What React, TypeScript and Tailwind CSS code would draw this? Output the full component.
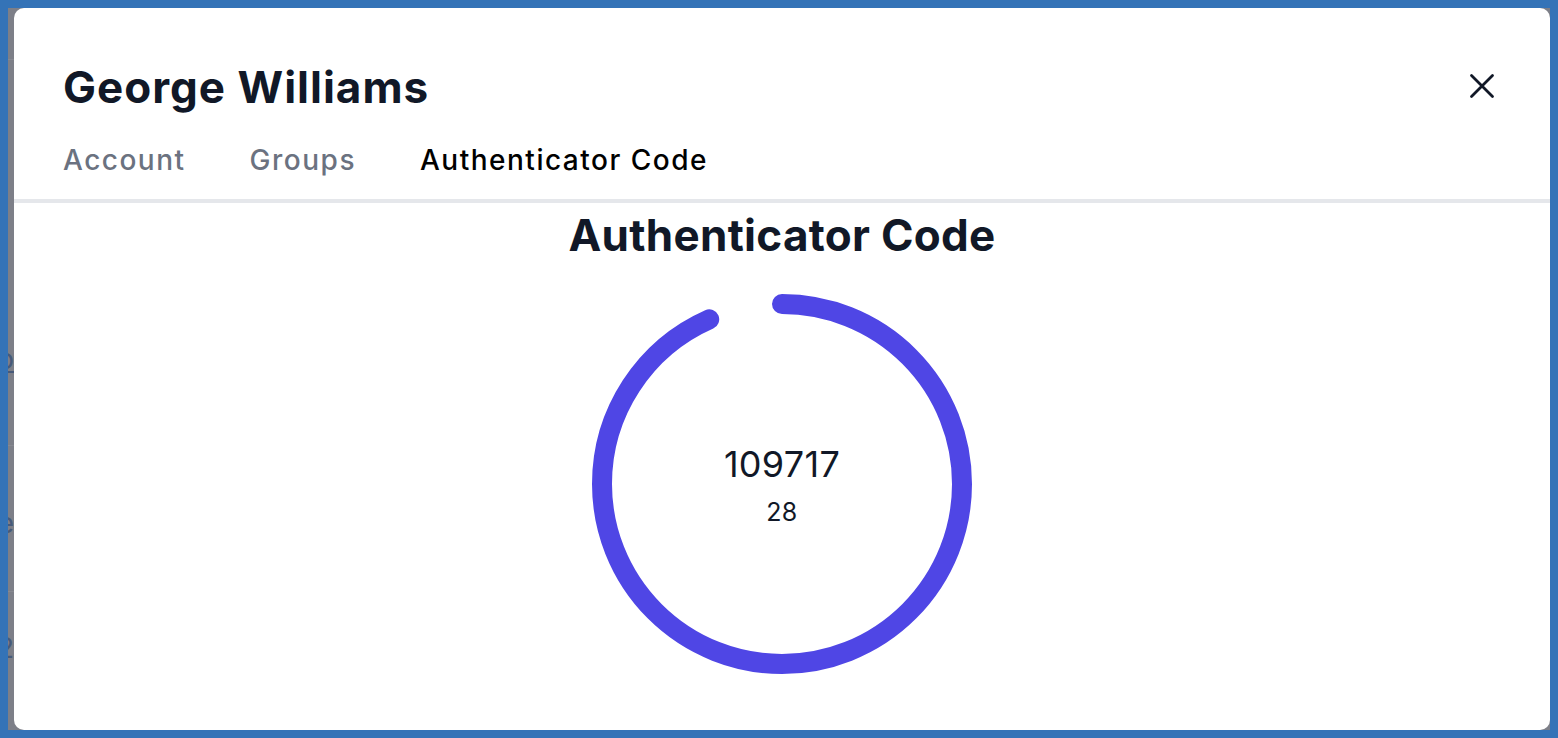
import { useState } from 'react';

const tabs = ['Account', 'Groups', 'Authenticator Code'];

function CodeRing({ remaining, period }: { remaining: number; period: number }) {
  const r = 180;
  const circumference = 2 * Math.PI * r;
  const dash = (circumference * remaining) / period;

  return (
    <div className="relative w-[380px] h-[380px]">
      <svg width="380" height="380" viewBox="0 0 380 380" className="-rotate-90">
        <circle
          cx="190"
          cy="190"
          r={r}
          fill="none"
          stroke="#4f46e5"
          strokeWidth="20"
          strokeLinecap="round"
          style={{ strokeDasharray: `${dash} ${circumference}` }}
        />
      </svg>
      <div className="absolute inset-0 flex flex-col items-center justify-center pt-[4px]">
        <div className="text-[36px] leading-[40px] text-[#111827] tracking-[0.3px]">109717</div>
        <div className="mt-[12px] text-[25px] leading-[32px] text-[#111827] tracking-[0.3px]">{remaining}</div>
      </div>
    </div>
  );
}

export default function App() {
  const [active, setActive] = useState('Authenticator Code');

  return (
    <div className="w-[1558px] h-[738px] bg-[#3473b7] p-2 font-['Inter',sans-serif]">
      <div className="flex h-full overflow-hidden bg-[#7d7f88]">
        {/* page behind the dialog, only a sliver shows */}
        <div className="w-[6px] shrink-0 flex flex-col overflow-hidden">
          <div className="h-[52px] shrink-0 border-b border-[#878991]" />
          <div className="h-[386px] shrink-0 flex flex-col justify-end items-end pb-[70px] border-b border-[#878991]">
            <span className="text-[28px] leading-[32px] text-[#475a7a] whitespace-nowrap underline">o</span>
          </div>
          <div className="h-[146px] shrink-0 flex flex-col justify-center items-end pt-[8px] border-b border-[#878991]">
            <span className="text-[28px] leading-[32px] text-[#475a7a] whitespace-nowrap">e</span>
          </div>
          <div className="flex-1 flex items-start justify-end pt-[40px]">
            <span className="text-[28px] leading-[32px] text-[#475a7a] whitespace-nowrap">2</span>
          </div>
        </div>

        <div className="flex-1 bg-white rounded-[10px] flex flex-col">
          <div className="flex items-start justify-between pl-[49px] pr-[47px] pt-[53px]">
            <h2 className="text-[44px] leading-[52px] font-bold text-[#111827] tracking-[1px]">George Williams</h2>
            <button type="button" className="mt-[4px] text-[#111827]" aria-label="Close">
              <svg width="42" height="42" viewBox="0 0 24 24" fill="none" stroke="currentColor" strokeWidth="1.6">
                <path strokeLinecap="round" strokeLinejoin="round" d="M6 18 18 6M6 6l12 12" />
              </svg>
            </button>
          </div>

          <nav className="flex gap-[64px] pl-[49px] pt-[29px] pb-[21px] border-b-4 border-[#e5e7eb]">
            {tabs.map((t) => (
              <button
                key={t}
                type="button"
                onClick={() => setActive(t)}
                className={
                  t === active
                    ? 'text-[28px] leading-[36px] font-medium tracking-[1.5px] text-black'
                    : 'text-[28px] leading-[36px] font-medium tracking-[1.5px] text-[#6b7280]'
                }
              >
                {t}
              </button>
            ))}
          </nav>

          <div className="flex flex-col items-center pt-[6px]">
            <h3 className="text-[44px] leading-[52px] font-bold text-[#111827] tracking-[0.3px]">Authenticator Code</h3>
            <div className="mt-[33px]">
              <CodeRing remaining={28} period={30} />
            </div>
          </div>
        </div>
      </div>
    </div>
  );
}
